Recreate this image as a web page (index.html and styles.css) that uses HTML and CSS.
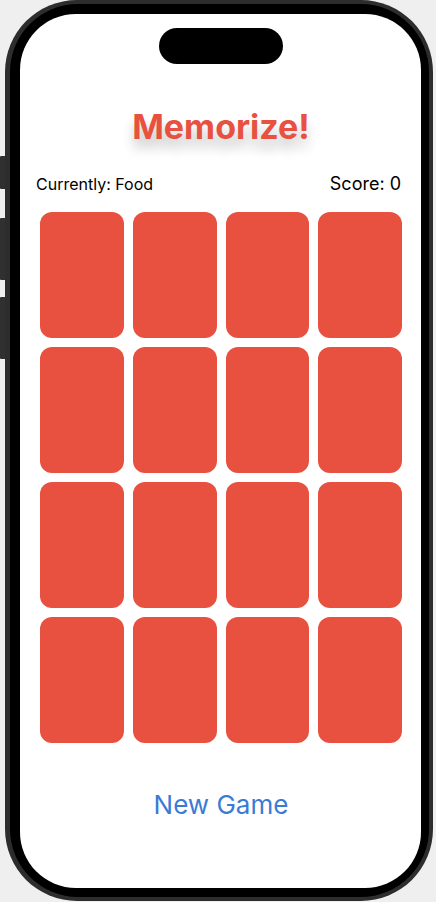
FILE: index.html
```html
<!DOCTYPE html>
<html>
<head>
    <title>Memorize!</title>
    <meta charset="UTF-8" />
    <link rel="stylesheet" href="styles.css">
</head>
<body>
    <div class="device">
        <div class="sideKeys">
            <span class="key mute"></span>
            <span class="key volume"></span>
            <span class="key volume"></span>
        </div>
        <div class="phone">
            <div class="bezel">
                <div class="screen">
                    <div class="island"></div>
                    <h1 class="title">Memorize!</h1>
                    <div class="info">
                        <span class="theme">Currently: Food</span>
                        <span class="score">Score: 0</span>
                    </div>
                    <div class="cardGrid">
                        <div class="card"></div>
                        <div class="card"></div>
                        <div class="card"></div>
                        <div class="card"></div>
                        <div class="card"></div>
                        <div class="card"></div>
                        <div class="card"></div>
                        <div class="card"></div>
                        <div class="card"></div>
                        <div class="card"></div>
                        <div class="card"></div>
                        <div class="card"></div>
                        <div class="card"></div>
                        <div class="card"></div>
                        <div class="card"></div>
                        <div class="card"></div>
                    </div>
                    <button class="newGame">New Game</button>
                </div>
            </div>
        </div>
    </div>
</body>
</html>
```
FILE: styles.css
```css
body
{
    margin: 0;
    background-color: #efefef;
    font-family: Inter, "Noto Sans", sans-serif;
}

.device
{
    display: flex;
    align-items: flex-start;
}

.sideKeys
{
    display: flex;
    flex-direction: column;
    width: 5px;
    padding-top: 156px;
}

.sideKeys > .key
{
    display: block;
    background-color: #303030;
    border-radius: 1px 0 0 1px;
}

.sideKeys > .mute
{
    height: 33px;
    margin-bottom: 29px;
}

.sideKeys > .volume
{
    height: 62px;
    margin-bottom: 17px;
}

.phone
{
    width: 428px;
    height: 901px;
    box-sizing: border-box;
    padding: 4px 4px 4px 5px;
    background-color: #2d2d2d;
    border-radius: 72px;
}

.bezel
{
    height: 100%;
    box-sizing: border-box;
    padding: 10px 8px 9px 10px;
    background-color: #000;
    border-radius: 68px;
}

.screen
{
    height: 100%;
    box-sizing: border-box;
    padding: 14px 19px 0 20px;
    background-color: #fff;
    border-radius: 56px;
}

.island
{
    width: 124px;
    height: 36px;
    margin: 0 auto;
    background-color: #000;
    border-radius: 18px;
}

.title
{
    margin: 43px 0 0 0;
    font-size: 34px;
    line-height: 40px;
    font-weight: 700;
    text-align: center;
    color: #e8503f;
    text-shadow: 0 10px 12px rgba(0, 0, 0, 0.22);
}

.info
{
    display: flex;
    justify-content: space-between;
    align-items: baseline;
    margin: 26px 1px 0 -4px;
    line-height: 22px;
    color: #000;
}

.info > .theme
{
    font-size: 16px;
}

.info > .score
{
    font-size: 18px;
}

.cardGrid
{
    display: grid;
    grid-template-columns: repeat(4, 1fr);
    grid-auto-rows: 126px;
    gap: 9px;
    margin-top: 17px;
}

.card
{
    background-color: #e8503f;
    border-radius: 12px;
}

.newGame
{
    display: block;
    margin: 46px auto 0 auto;
    padding: 0;
    border: 0;
    background: none;
    font-family: Inter, "Noto Sans", sans-serif;
    font-size: 26px;
    line-height: 32px;
    color: #3a7bd5;
    cursor: pointer;
}
```
